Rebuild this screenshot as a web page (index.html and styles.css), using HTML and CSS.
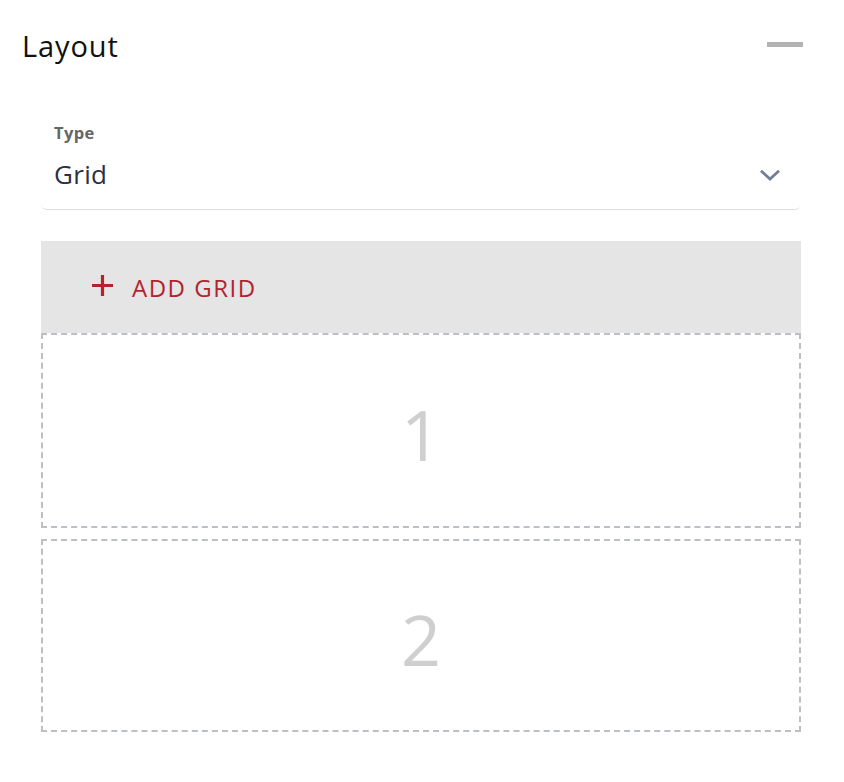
FILE: index.html
```html
<!DOCTYPE html>
<html>
<head>
<meta charset="utf-8">
<link rel="stylesheet" href="styles.css">
</head>
<body>
<div class="panel">
  <div class="header">
    <h1 class="title">Layout</h1>
    <span class="collapse"></span>
  </div>
  <div class="select">
    <div class="select-text">
      <div class="label">Type</div>
      <div class="value">Grid</div>
    </div>
    <svg class="chevron" width="22" height="12" viewBox="0 0 22 12"><path d="M2 1.8 L11 10 L20 1.8" fill="none" stroke="#718096" stroke-width="2.8"/></svg>
  </div>
  <div class="add-bar">
    <svg class="plus" width="21" height="21" viewBox="0 0 21 21"><path d="M10.5 0 V21 M0 10.5 H21" stroke="#b1242e" stroke-width="3.2"/></svg>
    <span class="add-text">ADD GRID</span>
  </div>
  <div class="cell">1</div>
  <div class="cell">2</div>
</div>
</body>
</html>
```

FILE: styles.css
```css
html, body { margin: 0; padding: 0; background: #fff; }
body { font-family: "Open Sans", "Noto Sans", sans-serif; }
.panel { padding: 0 43px 0 41px; }
.header { display: flex; align-items: center; justify-content: space-between; height: 90px; margin-left: -19px; }
.title { margin: 0; font-weight: 400; font-size: 29px; color: #111; letter-spacing: 0.9px; }
.collapse { width: 36px; height: 5px; background: #b3b3b3; margin-right: -2px; margin-top: -1px; }
.select { display: flex; align-items: flex-start; justify-content: space-between; height: 96px; margin-top: 23px; margin-bottom: 32px; box-sizing: border-box; padding: 9px 20px 0 13px; border-radius: 0 0 6px 6px; box-shadow: 0 2px 1px -1px #dcdcdc; }
.select-text { display: flex; flex-direction: column; }
.label { font-size: 16.5px; font-weight: 700; color: #666; line-height: 22px; letter-spacing: 0.4px; }
.value { font-size: 26px; color: #2a3142; line-height: 34px; margin-top: 13px; letter-spacing: 0.3px; }
.chevron { margin-top: 47px; }
.add-bar { height: 92px; background: #e5e5e5; display: flex; align-items: center; padding-left: 51px; color: #b1242e; }
.plus { margin-right: 19px; margin-top: -3px; }
.add-text { font-size: 24px; letter-spacing: 1.5px; }
.cell { height: 195px; box-sizing: border-box; border: 2px dashed #bcbfc3; display: flex; align-items: center; justify-content: center; padding-top: 6px; font-size: 70px; color: #cfcfcf; font-weight: 400; margin-bottom: 11px; }
.cell + .cell { height: 193px; }
```
